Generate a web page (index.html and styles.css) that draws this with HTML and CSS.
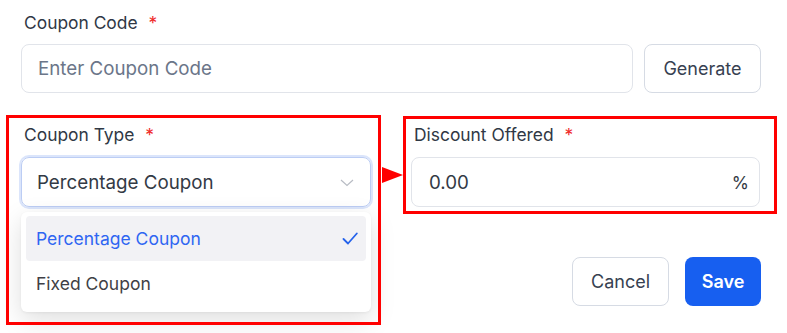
FILE: index.html
```html
<!DOCTYPE html>
<html>
<head>
<meta charset="utf-8">
<link rel="stylesheet" href="styles.css">
</head>
<body>
<div class="form">
  <div class="field">
    <label class="label first">Coupon Code <span class="req">*</span></label>
    <div class="code-row">
      <div class="input placeholder">Enter Coupon Code</div>
      <button class="btn btn-outline gen">Generate</button>
    </div>
  </div>
  <div class="grid">
    <div class="field type-field">
      <label class="label">Coupon Type <span class="req">*</span></label>
      <div class="select">
        <span>Percentage Coupon</span>
        <svg class="chev" width="14" height="8" viewBox="0 0 14 8"><path d="M1 1l6 5.5L13 1" fill="none" stroke="#b8bcc4" stroke-width="1.2"/></svg>
      </div>
      <div class="menu">
        <div class="opt active"><span>Percentage Coupon</span>
          <svg width="16" height="13" viewBox="0 0 16 13"><path d="M1.5 7l4.5 4.5L14.8 1.5" fill="none" stroke="#2563eb" stroke-width="1.8" stroke-linecap="round" stroke-linejoin="round"/></svg>
        </div>
        <div class="opt">Fixed Coupon</div>
      </div>
      <div class="mark mark-left"></div>
      <svg class="arrow" width="22" height="18" viewBox="0 0 22 18"><path d="M0 1L21 9L0 17Z" fill="#ff0000"/></svg>
    </div>
    <div class="field disc-field">
      <label class="label">Discount Offered <span class="req">*</span></label>
      <div class="input value"><span>0.00</span><span class="pct">%</span></div>
      <div class="mark mark-right"></div>
    </div>
  </div>
  <div class="actions">
    <button class="btn btn-outline cancel">Cancel</button>
    <button class="btn btn-primary save">Save</button>
  </div>
</div>
</body>
</html>
```
FILE: styles.css
```css
* { box-sizing: border-box; }
html, body { margin: 0; background: #fff; }
body {
  width: 787px;
  height: 333px;
  overflow: hidden;
  font-family: Inter, "Noto Sans", sans-serif;
}
.form {
  padding: 10px 26px 0 21px;
  display: flex;
  flex-direction: column;
}
.field { display: flex; flex-direction: column; position: relative; }
.label {
  font-size: 17.4px;
  line-height: 24px;
  color: #303845;
  padding-left: 3px;
  margin-bottom: 10px;
}
.label.first { padding-top: 1px; margin-bottom: 9px; }
.req { color: #ef2b2b; margin-left: 6px; }
.code-row { display: flex; gap: 11px; }
.input {
  flex: 1;
  height: 49px;
  border: 1px solid #e1e4ea;
  border-radius: 8px;
  display: flex;
  align-items: center;
  padding: 0 16px;
  font-size: 18.75px;
  color: #333a45;
}
.placeholder { color: #6b7689; }
.btn {
  font-family: inherit;
  font-size: 18px;
  height: 49px;
  border-radius: 8px;
  cursor: pointer;
}
.btn-outline { background: #fff; border: 1px solid #d6dbe4; color: #374151; }
.gen { width: 117px; }
.grid {
  display: grid;
  grid-template-columns: 350px 349px;
  column-gap: 40px;
  margin-top: 30px;
}
.select {
  height: 50px;
  border: 1px solid #bccdf4;
  box-shadow: 0 0 0 2px #dbe5fb;
  border-radius: 8px;
  display: flex;
  align-items: center;
  justify-content: space-between;
  padding: 0 16px 0 15px;
  font-size: 18.75px;
  color: #333a45;
}
.chev { margin-top: 2px; }
.disc-field .input { padding: 0 10px 0 17px; justify-content: space-between; }
.pct { font-size: 17.5px; }
.menu {
  position: absolute;
  left: 0;
  top: 89px;
  width: 350px;
  height: 100px;
  background: #fff;
  border-radius: 6px;
  box-shadow: 0 8px 26px rgba(0,0,0,0.13), 0 1px 3px rgba(0,0,0,0.05);
  padding: 4px 5px;
  z-index: 2;
}
.opt {
  height: 45px;
  display: flex;
  align-items: center;
  justify-content: space-between;
  padding: 0 8px 0 10px;
  font-size: 17.5px;
  color: #3f3f46;
  border-radius: 4px;
}
.opt.active { background: #f2f2f5; color: #2f66f2; }
.mark {
  position: absolute;
  border: 3px solid #ff0000;
  z-index: 3;
  pointer-events: none;
}
.mark-left { left: -15px; top: -8px; width: 375px; height: 210px; }
.mark-right { left: -8px; top: -7px; width: 374px; height: 98px; }
.arrow { position: absolute; left: 361px; top: 43px; z-index: 3; }
.actions {
  display: flex;
  justify-content: flex-end;
  gap: 16px;
  margin-top: 50px;
}
.cancel { width: 97px; }
.btn-primary {
  background: #175ff0;
  border: none;
  color: #fff;
  font-weight: 600;
  width: 76px;
}
```
